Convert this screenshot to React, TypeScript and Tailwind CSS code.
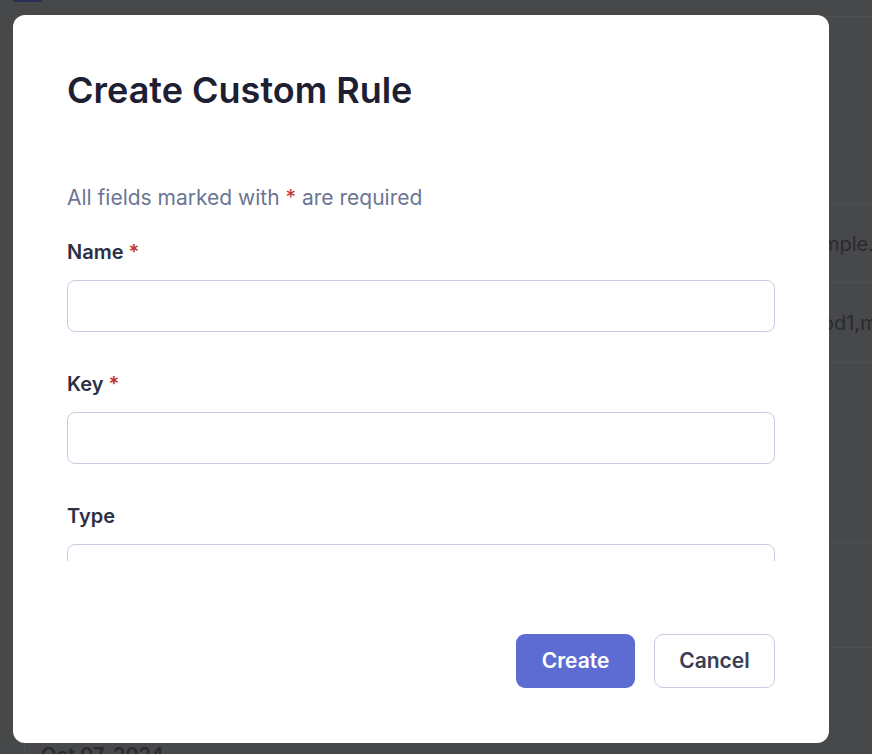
import React from 'react';

const Field = ({ label, required }: { label: string; required?: boolean }) => (
  <div className="flex flex-col gap-[14px]">
    <label className="text-[20px] leading-[28px] font-semibold text-[#2b3044]">
      {label} {required && <span className="text-[#c0362c]">*</span>}
    </label>
    <input className="h-[52px] w-full rounded-lg border border-[#c6cee3] bg-white px-4 text-[20px] outline-none" />
  </div>
);

const App = () => {
  return (
    <div
      className="relative h-[754px] w-[872px] overflow-hidden bg-[#47484a]"
      style={{ fontFamily: 'Inter, "Noto Sans", sans-serif' }}
    >
      {/* dimmed page behind the dialog */}
      <div className="ml-[13px] h-[2px] w-[29px] bg-[#2a2d57]" />
      <div className="ml-[24px] mt-[14px] h-[780px] rounded-tl-xl border-t border-l border-[#4f5052]">
        <div className="h-[188px] border-b border-[#4f5052]" />
        <div className="flex h-[78px] items-center border-b border-[#4f5052] text-[20px] text-[#2a2b30]">
          <span className="pl-[797px] whitespace-nowrap">mple.com</span>
        </div>
        <div className="flex h-[80px] items-center border-b border-[#4f5052] text-[20px] text-[#2a2b30]">
          <span className="pl-[797px] whitespace-nowrap">od1,mod2</span>
        </div>
        <div className="h-[180px] border-b border-[#4f5052]" />
        <div className="h-[105px] border-b border-[#4f5052]" />
        <div className="pl-[16px] pt-[92px] text-[20px] font-semibold text-[#2a2b30]">Oct 07, 2024</div>
      </div>

      {/* dialog */}
      <div className="absolute left-[13px] top-[15px] flex h-[728px] w-[816px] flex-col rounded-xl bg-white">
        <div className="px-[54px] pt-[55px]">
          <h2 className="text-[36px] leading-[40px] font-semibold text-[#1d2032]">Create Custom Rule</h2>
        </div>
        <div className="h-[451px] overflow-hidden px-[54px] pt-[74px]">
          <p className="text-[21px] leading-[28px] text-[#6b7694]">
            All fields marked with <span className="text-[#c0362c]">*</span> are required
          </p>
          <div className="mt-[26px] flex flex-col gap-[38px]">
            <Field label="Name" required />
            <Field label="Key" required />
            <Field label="Type" />
          </div>
        </div>
        <div className="flex justify-end gap-[19px] px-[54px] pt-[73px]">
          <button className="h-[54px] w-[119px] rounded-[9px] bg-[#5c6cd3] text-[21px] font-semibold text-white">
            Create
          </button>
          <button className="h-[54px] w-[121px] rounded-[9px] border border-[#c6cee3] bg-white text-[21px] font-semibold text-[#3a3e51]">
            Cancel
          </button>
        </div>
      </div>
    </div>
  );
};

export default App;
